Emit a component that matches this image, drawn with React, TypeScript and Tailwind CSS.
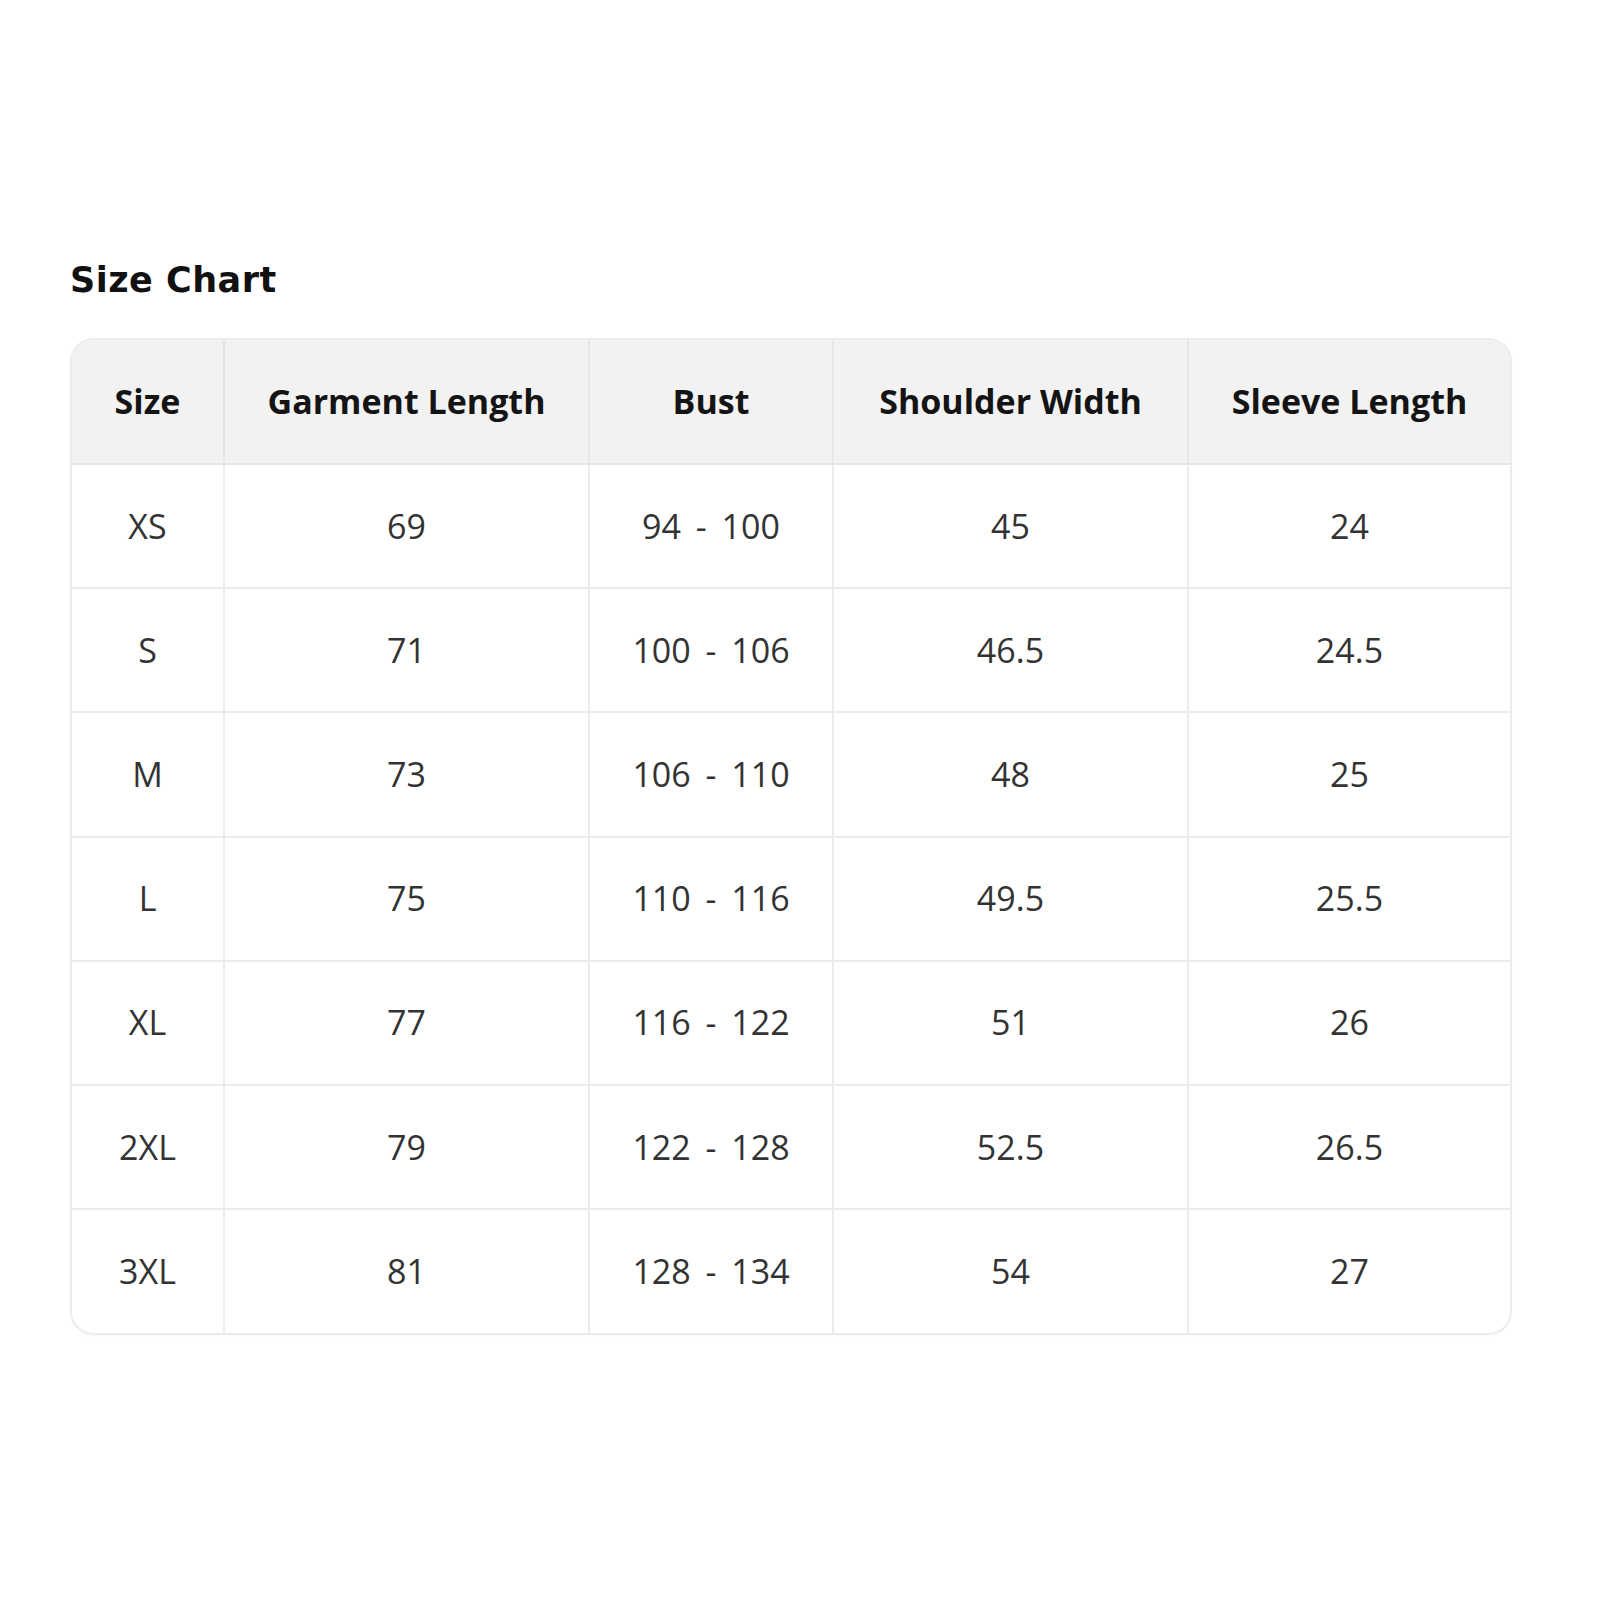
import React from 'react';

const headers = ['Size', 'Garment Length', 'Bust', 'Shoulder Width', 'Sleeve Length'];

const rows: string[][] = [
  ['XS', '69', '94 - 100', '45', '24'],
  ['S', '71', '100 - 106', '46.5', '24.5'],
  ['M', '73', '106 - 110', '48', '25'],
  ['L', '75', '110 - 116', '49.5', '25.5'],
  ['XL', '77', '116 - 122', '51', '26'],
  ['2XL', '79', '122 - 128', '52.5', '26.5'],
  ['3XL', '81', '128 - 134', '54', '27'],
];

const widths = ['w-[152px]', 'w-[365px]', 'w-[244px]', 'w-[355px]', 'w-[322px]'];

export default function App() {
  return (
    <div className="min-h-[1600px] w-[1600px] bg-white pl-[70px] pt-[260px] font-['Open_Sans','Liberation_Sans',sans-serif]">
      <h2 className="text-[35px] font-extrabold leading-[40px] tracking-[0.5px] text-[#111] font-['DejaVu_Sans','Liberation_Sans',sans-serif]">
        Size Chart
      </h2>

      <div className="mt-[38px] w-[1442px] overflow-hidden rounded-[24px] border-2 border-[#ececec] shadow-[0_1px_3px_rgba(0,0,0,0.04)]">
        <table className="w-full border-collapse">
          <colgroup>
            {widths.map((w, i) => (
              <col key={i} className={w} />
            ))}
          </colgroup>
          <thead>
            <tr className="h-[124px] bg-[#f2f2f2]">
              {headers.map((h, i) => (
                <th
                  key={h}
                  className={
                    'border-b-2 border-[#e6e6e6] text-center text-[34px] font-bold text-[#141414] ' +
                    (i < headers.length - 1 ? 'border-r-2' : '')
                  }
                >
                  {h}
                </th>
              ))}
            </tr>
          </thead>
          <tbody>
            {rows.map((r, ri) => (
              <tr key={r[0]} className="h-[124.2px] bg-white">
                {r.map((c, ci) => (
                  <td
                    key={ci}
                    className={
                      'border-[#ececec] text-center text-[34px] text-[#333] [word-spacing:6px] ' +
                      (ci < r.length - 1 ? 'border-r-2 ' : '') +
                      (ri < rows.length - 1 ? 'border-b-2' : '')
                    }
                  >
                    {c}
                  </td>
                ))}
              </tr>
            ))}
          </tbody>
        </table>
      </div>
    </div>
  );
}
